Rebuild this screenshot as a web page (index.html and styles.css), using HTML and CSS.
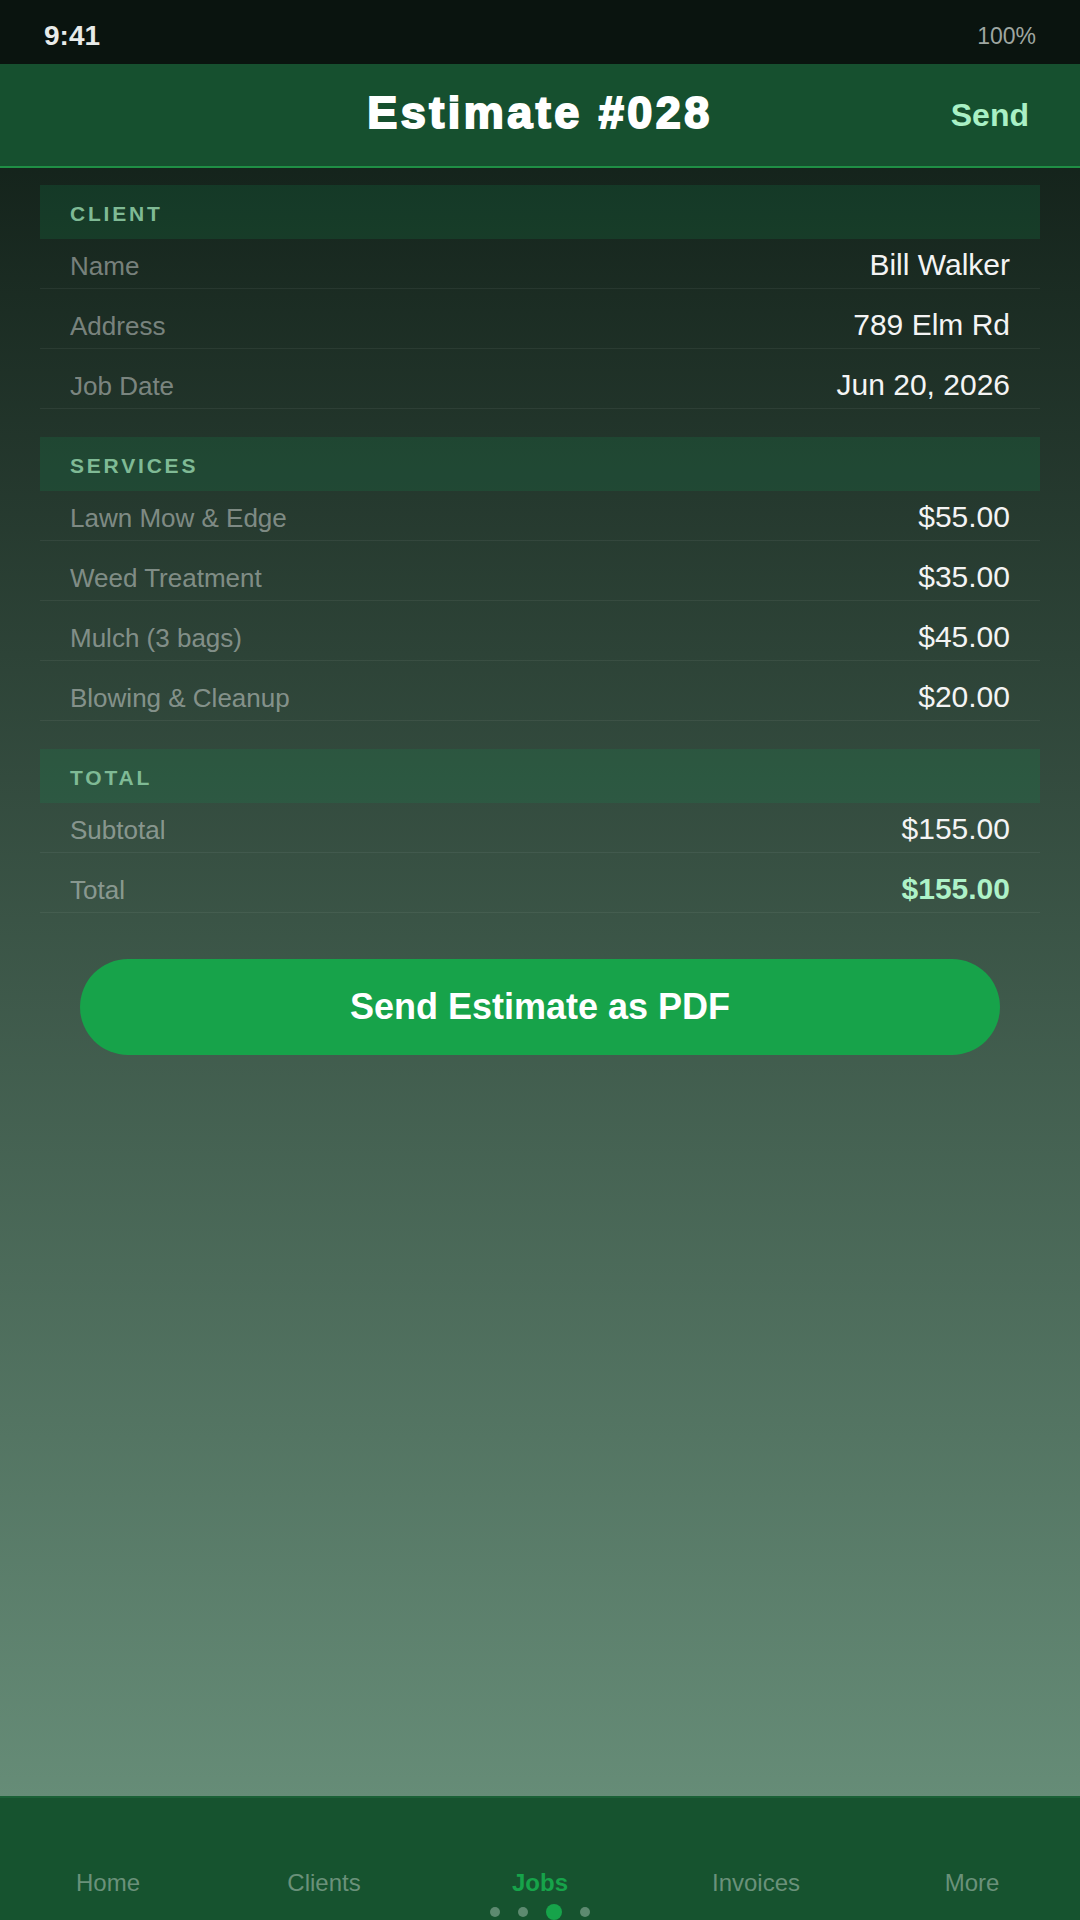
FILE: index.html
```html
<!DOCTYPE html>
<html lang="en">
<head>
<meta charset="utf-8">
<title>Estimate #028</title>
<link rel="stylesheet" href="styles.css">
</head>
<body>
<div class="app">
  <div class="status-bar">
    <span class="time">9:41</span>
    <span class="battery">100%</span>
  </div>
  <header class="top-bar">
    <span class="spacer"></span>
    <h1 class="title">Estimate #028</h1>
    <span class="send-link">Send</span>
  </header>
  <main class="content">
    <section class="section">
      <div class="section-head">CLIENT</div>
      <div class="row"><span class="label">Name</span><span class="value">Bill Walker</span></div>
      <div class="row"><span class="label">Address</span><span class="value">789 Elm Rd</span></div>
      <div class="row"><span class="label">Job Date</span><span class="value">Jun 20, 2026</span></div>
    </section>
    <section class="section">
      <div class="section-head">SERVICES</div>
      <div class="row"><span class="label">Lawn Mow &amp; Edge</span><span class="value">$55.00</span></div>
      <div class="row"><span class="label">Weed Treatment</span><span class="value">$35.00</span></div>
      <div class="row"><span class="label">Mulch (3 bags)</span><span class="value">$45.00</span></div>
      <div class="row"><span class="label">Blowing &amp; Cleanup</span><span class="value">$20.00</span></div>
    </section>
    <section class="section">
      <div class="section-head">TOTAL</div>
      <div class="row"><span class="label">Subtotal</span><span class="value">$155.00</span></div>
      <div class="row"><span class="label">Total</span><span class="value total">$155.00</span></div>
    </section>
    <button class="pdf-button">Send Estimate as PDF</button>
  </main>
  <nav class="tab-bar">
    <div class="tabs">
      <span class="tab">Home</span>
      <span class="tab">Clients</span>
      <span class="tab active">Jobs</span>
      <span class="tab">Invoices</span>
      <span class="tab">More</span>
    </div>
    <div class="dots">
      <span class="dot"></span>
      <span class="dot"></span>
      <span class="dot active"></span>
      <span class="dot"></span>
    </div>
  </nav>
</div>
</body>
</html>
```

FILE: styles.css
```css
* { box-sizing: border-box; }

html, body {
  margin: 0;
  padding: 0;
}

body {
  width: 1080px;
  height: 1920px;
  font-family: "Liberation Sans", Arial, sans-serif;
  color: #f2f2f2;
  overflow: hidden;
}

.app {
  display: flex;
  flex-direction: column;
  height: 1920px;
  background: linear-gradient(180deg, #14231b 0%, #14231b 8%, #6c947e 100%);
}

.status-bar {
  height: 64px;
  background: #0a140f;
  display: flex;
  align-items: center;
  justify-content: space-between;
  padding: 8px 44px 0;
}

.time {
  font-size: 28px;
  font-weight: 700;
  color: #e8ebe9;
}

.battery {
  font-size: 23px;
  color: #9ea6a1;
}

.top-bar {
  height: 104px;
  background: #16502f;
  border-bottom: 2px solid #1f8f45;
  display: grid;
  grid-template-columns: 1fr auto 1fr;
  align-items: center;
}

.title {
  margin: 0;
  font-size: 45px;
  font-weight: 700;
  letter-spacing: 3.5px;
  -webkit-text-stroke: 2px #ffffff;
  color: #ffffff;
  padding-bottom: 4px;
}

.send-link {
  justify-self: end;
  padding-right: 51px;
  font-size: 32px;
  font-weight: 700;
  color: #a9f0c5;
}

.content {
  flex: 1;
  padding: 17px 40px 0;
}

.section {
  margin-bottom: 28px;
}

.section-head {
  height: 54px;
  display: flex;
  align-items: center;
  padding: 4px 30px 0;
  background: rgba(20, 140, 80, 0.2);
  font-size: 21px;
  font-weight: 700;
  letter-spacing: 2.8px;
  color: #7fba95;
}

.row {
  height: 60px;
  display: flex;
  justify-content: space-between;
  align-items: baseline;
  padding: 19px 30px 0;
  line-height: 34px;
  border-bottom: 1px solid rgba(255, 255, 255, 0.06);
}

.section-head + .row {
  height: 50px;
  padding-top: 9px;
}

.label {
  font-size: 26px;
  color: rgba(255, 255, 255, 0.42);
}

.value {
  font-size: 30px;
  color: #f4f4f4;
}

.value.total {
  font-weight: 700;
  color: #aef2c8;
}

.pdf-button {
  display: block;
  width: 920px;
  height: 96px;
  margin: 46px auto 0;
  border: none;
  border-radius: 48px;
  background: #17a34a;
  color: #ffffff;
  font-family: "Liberation Sans", Arial, sans-serif;
  font-size: 36px;
  font-weight: 700;
}

.tab-bar {
  height: 124px;
  background: #16532f;
  border-top: 2px solid #1b6137;
  padding-top: 70px;
}

.tabs {
  display: grid;
  grid-template-columns: repeat(5, 1fr);
  text-align: center;
  line-height: 30px;
}

.tab {
  font-size: 24px;
  color: #6a917a;
}

.tab.active {
  font-weight: 700;
  color: #16a34a;
}

.dots {
  display: flex;
  justify-content: center;
  align-items: center;
  gap: 18px;
  height: 16px;
  margin-top: 6px;
}

.dot {
  width: 10px;
  height: 10px;
  border-radius: 50%;
  background: #5d8a70;
}

.dot.active {
  width: 16px;
  height: 16px;
  background: #16a34a;
}
```
